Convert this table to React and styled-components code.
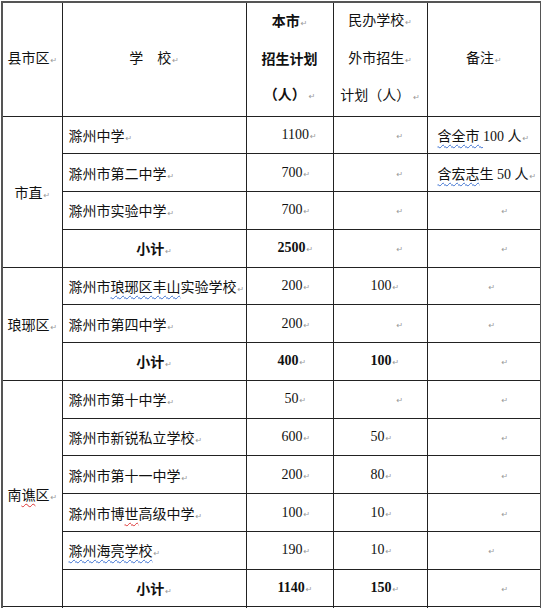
import React from "react";
import styled, { createGlobalStyle } from "styled-components";

const GlobalStyle = createGlobalStyle`
  html, body {
    margin: 0;
    padding: 0;
    background: #fff;
  }
  body {
    padding: 1px 0 0 1px;
    font-family: "Liberation Serif", "Noto Sans CJK SC", serif;
    font-size: 14px;
    color: #111;
  }
`;

const Table = styled.table`
  width: 539px;
  table-layout: fixed;
  border-collapse: collapse;
  border: 2px solid #555;
`;

const HeadCell = styled.th`
  height: 107px;
  padding: 0;
  border: 1px solid #222;
  font-weight: ${(p) => (p.$bold ? 700 : 400)};
  line-height: 35.5px;
  text-align: center;
  vertical-align: middle;
`;

const Row = styled.tr`
  height: 37.77px;
`;

const Cell = styled.td`
  padding: 0 0 0 ${(p) => p.$pad || 0}px;
  border: 1px solid #222;
  text-align: ${(p) => p.$align || "left"};
  vertical-align: middle;
  font-weight: ${(p) => (p.$bold ? 700 : 400)};
  white-space: nowrap;
  overflow: hidden;
`;

const Mark = styled.span`
  margin-left: ${(p) => p.$gap || 1}px;
  font-family: "DejaVu Sans", sans-serif;
  font-size: 8px;
  font-weight: 400;
  color: #999;
`;

const Wave = styled.span`
  text-decoration: underline wavy ${(p) => (p.$red ? "#d33" : "#3a6fd0")};
  text-decoration-thickness: 1px;
  text-underline-offset: 3px;
`;

const Line = styled.div``;

const groups = [
  {
    name: ["市直"],
    rows: [
      { school: ["滁州中学"], plan: "1100", out: null, note: [["含全市 ", "blue"], "100 人"] },
      { school: ["滁州市第二中学"], plan: "700", out: null, note: [["含宏志", "blue"], "生 50 人"] },
      { school: ["滁州市实验中学"], plan: "700", out: null, note: null, notePad: 73 },
    ],
    total: { plan: "2500", out: null, notePad: 73 },
  },
  {
    name: ["琅琊区"],
    rows: [
      { school: ["滁州市", ["琅琊区丰山", "blue"], "实验学校"], plan: "200", out: "100", note: null, notePad: 60 },
      { school: ["滁州市第四中学"], plan: "200", out: null, note: null, notePad: 60 },
    ],
    total: { plan: "400", out: "100", notePad: 73 },
  },
  {
    name: ["南", ["谯", "red"], "区"],
    rows: [
      { school: ["滁州市第十中学"], plan: "50", out: null, note: null, notePad: 73, planPad: 38 },
      { school: ["滁州市新锐私立学校"], plan: "600", out: "50", note: null, notePad: 73 },
      { school: ["滁州市第十一中学"], plan: "200", out: "80", note: null, notePad: 73 },
      { school: ["滁州市博", ["世", "red"], "高级中学"], plan: "100", out: "10", note: null, notePad: 73 },
      { school: [["滁州海亮学校", "blue"]], plan: "190", out: "10", note: null, notePad: 60 },
    ],
    total: { plan: "1140", out: "150", notePad: 73 },
  },
];

const Segments = ({ parts }) =>
  parts.map((part, i) =>
    Array.isArray(part) ? (
      <Wave key={i} $red={part[1] === "red"}>
        {part[0]}
      </Wave>
    ) : (
      <React.Fragment key={i}>{part}</React.Fragment>
    )
  );

const OutCell = ({ value, bold }) =>
  value ? (
    <Cell $pad={37} $bold={bold}>
      {value}
      <Mark>↵</Mark>
    </Cell>
  ) : (
    <Cell $pad={62}>
      <Mark>↵</Mark>
    </Cell>
  );

const NoteCell = ({ note, pad }) =>
  note ? (
    <Cell $pad={10}>
      <Segments parts={note} />
      <Mark>↵</Mark>
    </Cell>
  ) : (
    <Cell $pad={pad}>
      <Mark>↵</Mark>
    </Cell>
  );

const App = () => {
  return (
    <>
      <GlobalStyle />
      <Table>
        <colgroup>
          <col style={{ width: 60 }} />
          <col style={{ width: 184 }} />
          <col style={{ width: 87 }} />
          <col style={{ width: 94 }} />
          <col style={{ width: 114 }} />
        </colgroup>
        <thead>
          <tr>
            <HeadCell>
              县市区<Mark>↵</Mark>
            </HeadCell>
            <HeadCell>
              学　校<Mark>↵</Mark>
            </HeadCell>
            <HeadCell $bold>
              <Line>
                本市<Mark>↵</Mark>
              </Line>
              <Line>招生计划</Line>
              <Line>
                （人）<Mark $gap={3}>↵</Mark>
              </Line>
            </HeadCell>
            <HeadCell>
              <Line>
                民办学校<Mark>↵</Mark>
              </Line>
              <Line>
                外市招生<Mark>↵</Mark>
              </Line>
              <Line>
                计划（人）<Mark $gap={3}>↵</Mark>
              </Line>
            </HeadCell>
            <HeadCell>
              备注<Mark>↵</Mark>
            </HeadCell>
          </tr>
        </thead>
        <tbody>
          {groups.map((g, gi) => (
            <React.Fragment key={gi}>
              {g.rows.map((r, ri) => (
                <Row key={ri}>
                  {ri === 0 && (
                    <Cell rowSpan={g.rows.length + 1} $align="center">
                      <Segments parts={g.name} />
                      <Mark>↵</Mark>
                    </Cell>
                  )}
                  <Cell $pad={6}>
                    <Segments parts={r.school} />
                    <Mark>↵</Mark>
                  </Cell>
                  <Cell $pad={r.planPad || 35}>
                    {r.plan}
                    <Mark>↵</Mark>
                  </Cell>
                  <OutCell value={r.out} />
                  <NoteCell note={r.note} pad={r.notePad} />
                </Row>
              ))}
              <Row>
                <Cell $align="center" $bold>
                  小计<Mark>↵</Mark>
                </Cell>
                <Cell $pad={31} $bold>
                  {g.total.plan}
                  <Mark>↵</Mark>
                </Cell>
                <OutCell value={g.total.out} bold />
                <NoteCell note={null} pad={g.total.notePad} />
              </Row>
            </React.Fragment>
          ))}
          <Row>
            <Cell />
            <Cell />
            <Cell />
            <Cell />
            <Cell />
          </Row>
        </tbody>
      </Table>
    </>
  );
};

export default App;
